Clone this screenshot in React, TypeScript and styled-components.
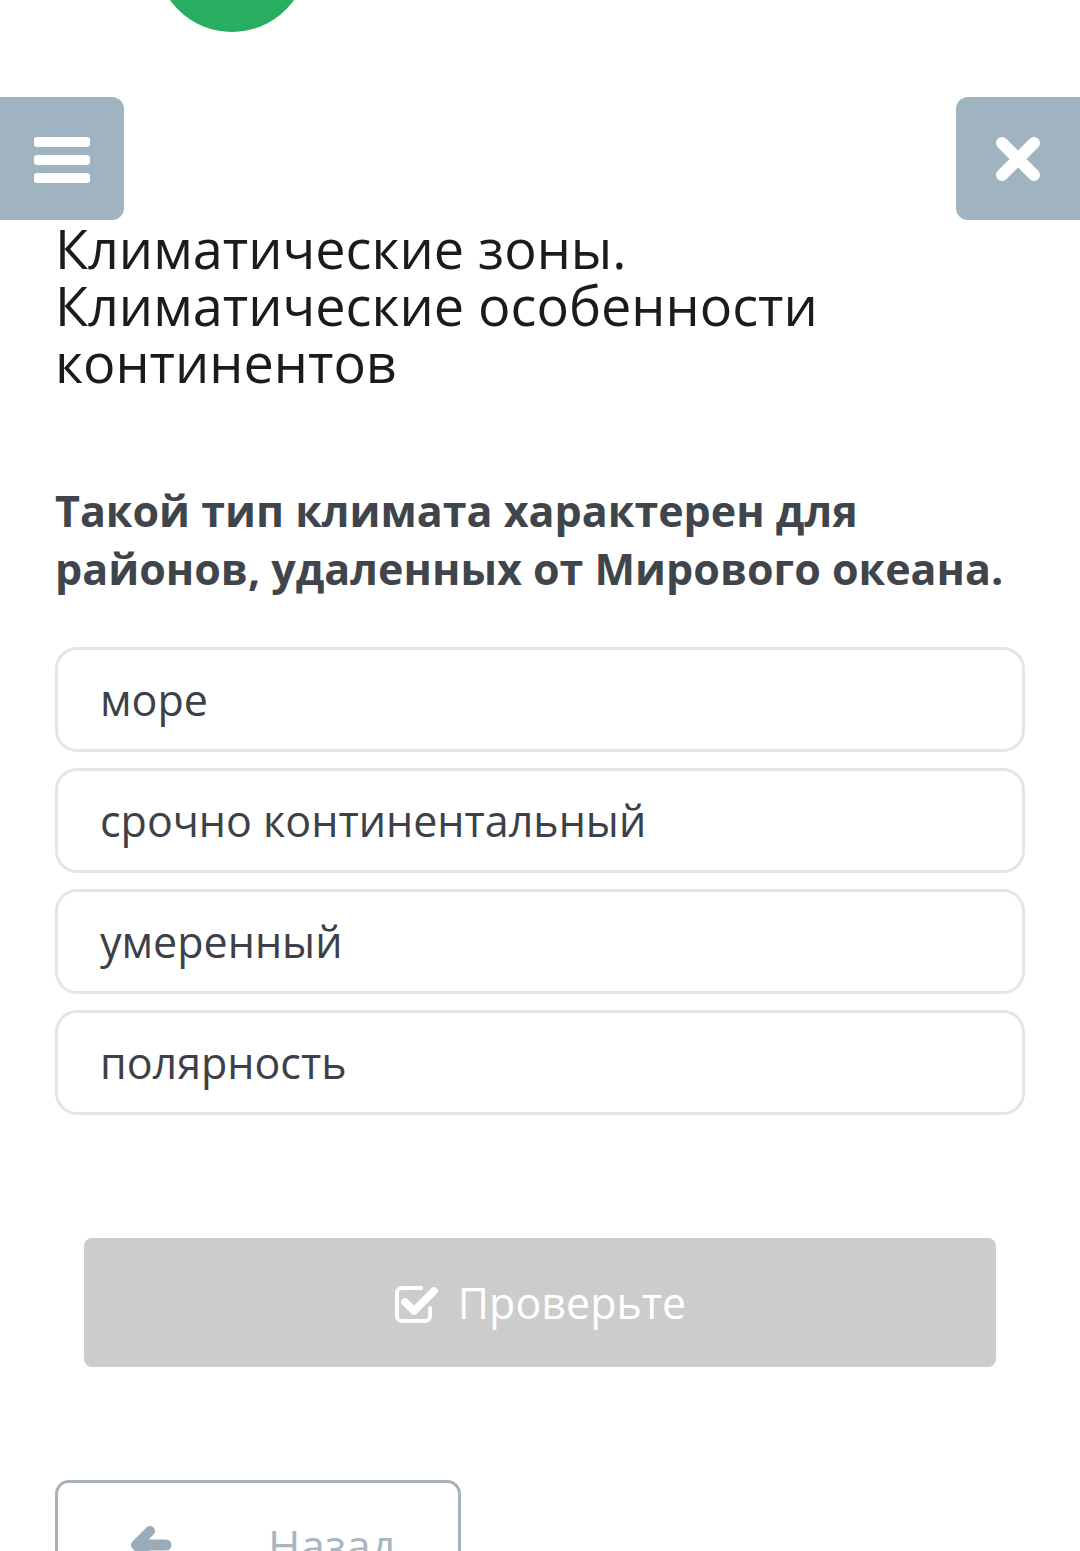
import React from "react";
import styled, { createGlobalStyle } from "styled-components";

const GlobalStyle = createGlobalStyle`
  html, body {
    margin: 0;
    padding: 0;
    background: #ffffff;
    overflow: hidden;
  }
  body {
    font-family: "Open Sans", "Noto Sans", sans-serif;
  }
`;

const Page = styled.div`
  width: 1080px;
  min-height: 1551px;
  display: flex;
  flex-direction: column;
`;

const TopStrip = styled.div`
  height: 97px;
  display: flex;
  justify-content: flex-start;
  padding-left: 156px;
  box-sizing: border-box;
`;

const Avatar = styled.div`
  width: 152px;
  height: 152px;
  border-radius: 50%;
  background: #27ae60;
  margin-top: -120px;
`;

const Header = styled.header`
  display: flex;
  justify-content: space-between;
  height: 123px;
`;

const SideButton = styled.button<{ $side: "left" | "right" }>`
  width: 124px;
  height: 123px;
  border: none;
  padding: 0;
  background: #9fb3c1;
  display: flex;
  align-items: center;
  justify-content: center;
  border-radius: ${(p) => (p.$side === "left" ? "0 12px 12px 0" : "12px 0 0 12px")};
`;

const Content = styled.main`
  padding: 0 55px;
  display: flex;
  flex-direction: column;
`;

const Title = styled.h1`
  margin: 0;
  font-size: 54px;
  line-height: 57px;
  font-weight: 400;
  color: #1b1b1b;
`;

const Question = styled.h2`
  margin: 91px 0 0;
  font-size: 43px;
  line-height: 58px;
  font-weight: 700;
  color: #40454c;
`;

const Options = styled.div`
  margin-top: 49px;
  display: flex;
  flex-direction: column;
  gap: 16px;
`;

const Option = styled.div`
  height: 105px;
  box-sizing: border-box;
  border: 3px solid #e2e6e7;
  border-radius: 22px;
  padding-left: 42px;
  display: flex;
  align-items: center;
  font-size: 43px;
  color: #3d4147;
`;

const CheckButton = styled.button`
  margin: 123px 29px 0;
  height: 129px;
  border: none;
  border-radius: 8px;
  background: #cccccc;
  color: #ffffff;
  font-family: "Open Sans", sans-serif;
  font-size: 43px;
  display: flex;
  align-items: center;
  justify-content: center;
  gap: 18px;
`;

const BackButton = styled.button`
  margin-top: 113px;
  width: 406px;
  height: 130px;
  box-sizing: border-box;
  border: 3px solid #a7b3ba;
  border-radius: 14px;
  background: #ffffff;
  color: #a9b6be;
  font-family: "Open Sans", sans-serif;
  font-size: 44px;
  display: flex;
  align-items: center;
  padding: 0 0 0 70px;
  gap: 96px;
`;

const options = ["море", "срочно континентальный", "умеренный", "полярность"];

export default function App() {
  return (
    <Page>
      <GlobalStyle />
      <TopStrip>
        <Avatar />
      </TopStrip>
      <Header>
        <SideButton $side="left" aria-label="menu">
          <svg width="58" height="48" viewBox="0 0 58 48">
            <rect x="1" y="2" width="56" height="10" rx="3" fill="#fff" />
            <rect x="1" y="20" width="56" height="10" rx="3" fill="#fff" />
            <rect x="1" y="38" width="56" height="10" rx="3" fill="#fff" />
          </svg>
        </SideButton>
        <SideButton $side="right" aria-label="close">
          <svg width="46" height="46" viewBox="0 0 46 46">
            <path d="M7 7 L39 39 M39 7 L7 39" stroke="#fff" strokeWidth="12" strokeLinecap="round" />
          </svg>
        </SideButton>
      </Header>
      <Content>
        <Title>
          Климатические зоны.
          <br />
          Климатические особенности
          <br />
          континентов
        </Title>
        <Question>
          Такой тип климата характерен для районов, удаленных от Мирового океана.
        </Question>
        <Options>
          {options.map((o) => (
            <Option key={o}>{o}</Option>
          ))}
        </Options>
        <CheckButton>
          <svg width="46" height="42" viewBox="0 0 46 42">
            <path
              d="M36 26 V34 a5 5 0 0 1 -5 5 H8 a5 5 0 0 1 -5 -5 V11 a5 5 0 0 1 5 -5 H27"
              fill="none"
              stroke="#fff"
              strokeWidth="4"
              strokeLinecap="round"
            />
            <path d="M11 20 L20 29 L40 9" fill="none" stroke="#fff" strokeWidth="7.5" strokeLinecap="round" strokeLinejoin="round" />
          </svg>
          Проверьте
        </CheckButton>
        <BackButton>
          <svg width="44" height="40" viewBox="0 0 44 40">
            <path d="M22 6 L8 20 L22 34" fill="none" stroke="#9aabb9" strokeWidth="10" strokeLinecap="round" strokeLinejoin="round" />
            <path d="M10 20 H38" stroke="#9aabb9" strokeWidth="11" strokeLinecap="round" />
          </svg>
          Назад
        </BackButton>
      </Content>
    </Page>
  );
}
